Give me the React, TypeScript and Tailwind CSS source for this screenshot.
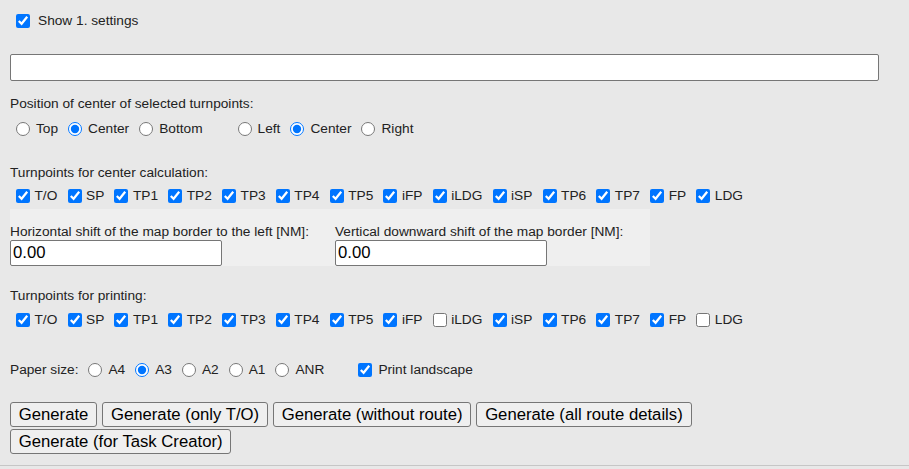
import React from 'react';

const centerPoints = [
  { name: 'T/O', on: true },
  { name: 'SP', on: true },
  { name: 'TP1', on: true },
  { name: 'TP2', on: true },
  { name: 'TP3', on: true },
  { name: 'TP4', on: true },
  { name: 'TP5', on: true },
  { name: 'iFP', on: true },
  { name: 'iLDG', on: true },
  { name: 'iSP', on: true },
  { name: 'TP6', on: true },
  { name: 'TP7', on: true },
  { name: 'FP', on: true },
  { name: 'LDG', on: true },
];

const printPoints = centerPoints.map((p) => ({
  ...p,
  on: p.name !== 'iLDG' && p.name !== 'LDG',
}));

function Check({ label, on }: { label: string; on: boolean }) {
  return (
    <label className="flex items-center mr-[10.2px]">
      <input type="checkbox" defaultChecked={on} className="w-[14px] h-[14px] mr-[4.5px]" />
      <span>{label}</span>
    </label>
  );
}

function Radio({ label, name, on }: { label: string; name: string; on?: boolean }) {
  return (
    <label className="flex items-center mr-[10px]">
      <input type="radio" name={name} defaultChecked={on} className="w-[14px] h-[14px] mr-[6px]" />
      <span>{label}</span>
    </label>
  );
}

function PointRow({ points, group }: { points: { name: string; on: boolean }[]; group: string }) {
  return (
    <div className="flex items-center h-[16px] pl-[6px]">
      {points.map((p) => (
        <Check key={group + p.name} label={p.name} on={p.on} />
      ))}
    </div>
  );
}

const buttons = [
  'Generate',
  'Generate (only T/O)',
  'Generate (without route)',
  'Generate (all route details)',
  'Generate (for Task Creator)',
];

export default function App() {
  return (
    <div className="min-h-screen bg-[#e8e8e8] text-[#222] text-[13.7px] leading-[16px] font-['Liberation_Sans',Arial,sans-serif]">
      <div className="px-[10px] pt-[12px]">
        {/* show settings */}
        <label className="flex items-center h-[18px] pl-[6px]">
          <input type="checkbox" defaultChecked className="w-[14px] h-[14px] mr-[8px]" />
          <span>Show 1. settings</span>
        </label>

        <input
          type="text"
          className="block mt-[24px] h-[27px] w-[869px] bg-white border border-[#767676] rounded-[2px] px-[2px] outline-none"
        />

        <div className="mt-[15px] h-[16px]">Position of center of selected turnpoints:</div>
        <div className="mt-[9px] flex items-center h-[16px] pl-[6px]">
          <Radio name="v" label="Top" />
          <Radio name="v" label="Center" on />
          <Radio name="v" label="Bottom" />
          <div className="w-[25px]" />
          <Radio name="h" label="Left" />
          <Radio name="h" label="Center" on />
          <Radio name="h" label="Right" />
        </div>

        <div className="mt-[28px] h-[16px]">Turnpoints for center calculation:</div>
        <div className="mt-[7px]">
          <PointRow points={centerPoints} group="c" />
        </div>

        {/* map border shift */}
        <div className="mt-[5px] w-[640px] h-[57px] bg-[#efefef] pt-[15px] grid grid-cols-[325px_1fr]">
          <div>
            <div className="h-[16px]">Horizontal shift of the map border to the left [NM]:</div>
            <input
              type="text"
              defaultValue="0.00"
              className="block h-[26px] w-[212px] bg-white border border-[#767676] rounded-[2px] px-[2px] text-[16.7px] text-black outline-none"
            />
          </div>
          <div>
            <div className="h-[16px]">Vertical downward shift of the map border [NM]:</div>
            <input
              type="text"
              defaultValue="0.00"
              className="block h-[26px] w-[212px] bg-white border border-[#767676] rounded-[2px] px-[2px] text-[16.7px] text-black outline-none"
            />
          </div>
        </div>

        <div className="mt-[22px] h-[16px]">Turnpoints for printing:</div>
        <div className="mt-[8px]">
          <PointRow points={printPoints} group="p" />
        </div>

        <div className="mt-[34px] flex items-center h-[16px]">
          <span className="mr-[10px]">Paper size:</span>
          <Radio name="paper" label="A4" />
          <Radio name="paper" label="A3" on />
          <Radio name="paper" label="A2" />
          <Radio name="paper" label="A1" />
          <Radio name="paper" label="ANR" />
          <label className="flex items-center ml-[24px]">
            <input type="checkbox" defaultChecked className="w-[14px] h-[14px] mr-[6px]" />
            <span>Print landscape</span>
          </label>
        </div>

        <div className="mt-[24px] flex flex-wrap gap-x-[5px] gap-y-[2px]">
          {buttons.map((b) => (
            <button
              key={b}
              className="h-[25px] px-[7.8px] bg-[#efefef] border border-[#767676] rounded-[3px] text-[16.7px] leading-[19px] text-black"
            >
              {b}
            </button>
          ))}
        </div>
      </div>
      <div className="mt-[11px] border-b border-[#c6c6c6]" />
    </div>
  );
}
